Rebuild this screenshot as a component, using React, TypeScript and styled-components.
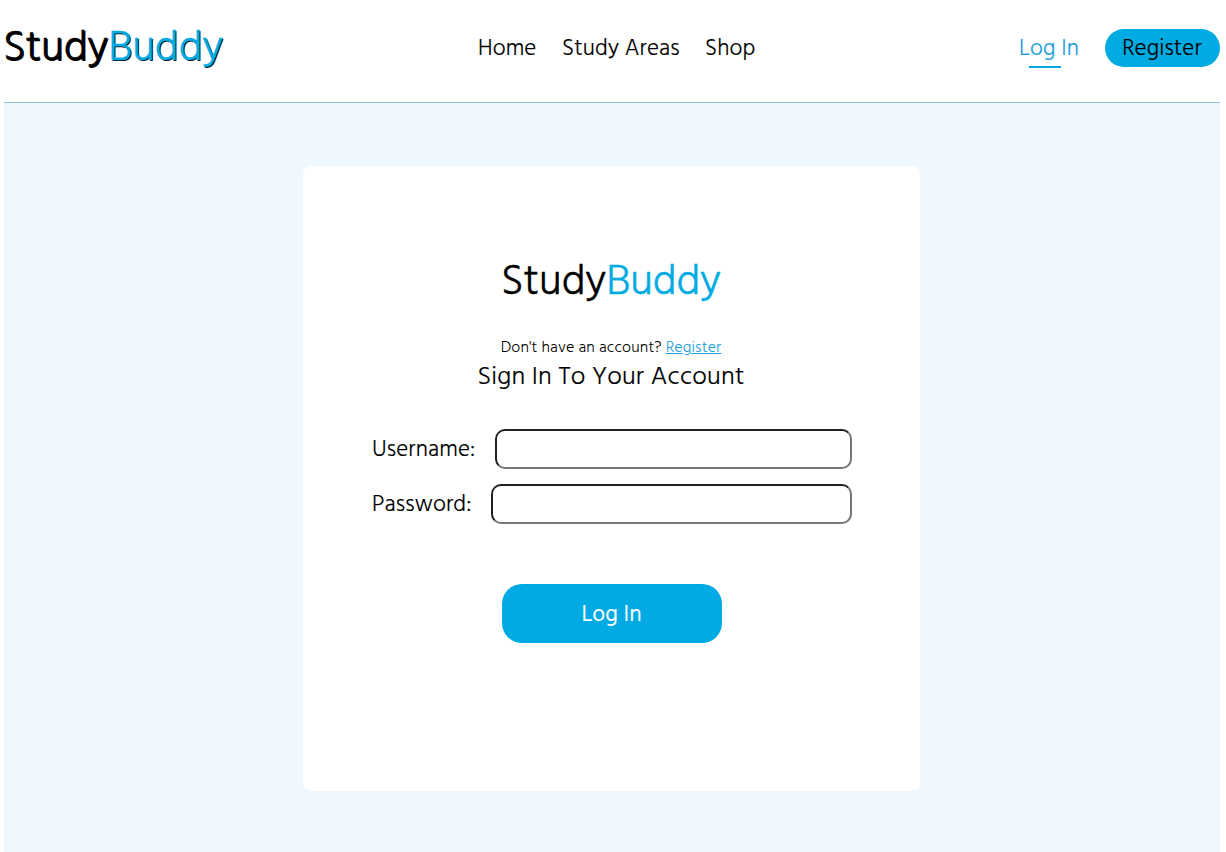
import React from "react";
import styled, { createGlobalStyle } from "styled-components";

const blue = "#00abe4";

const GlobalStyle = createGlobalStyle`
  * { box-sizing: border-box; }
  body {
    margin: 0 6px 0 4px;
    background: #fff;
    color: #000;
    font-family: Hind, "Open Sans", "Noto Sans", sans-serif;
    font-weight: 300;
    overflow: hidden;
  }
`;

const Header = styled.header`
  display: grid;
  grid-template-columns: 474px 1fr auto;
  align-items: center;
  height: 103px;
  padding-bottom: 6px;
  border-bottom: 1px solid #8fc1d4;
  -webkit-text-stroke: 0.15px;
`;

const Brand = styled.div<{ $shadow?: boolean }>`
  font-size: 43px;
  line-height: 60px;
  white-space: nowrap;
  letter-spacing: -0.1px;
  -webkit-text-stroke: 0.4px;
  text-shadow: ${(p) => (p.$shadow ? "1px 1px #000" : "none")};
  padding-top: ${(p) => (p.$shadow ? "1px" : "0")};
  margin-left: ${(p) => (p.$shadow ? "-1px" : "0")};
  span { color: ${blue}; }
`;

const Nav = styled.nav`
  display: flex;
  gap: 25px;
  padding-top: 4px;
`;

const NavLink = styled.a<{ $width: number }>`
  width: ${(p) => p.$width}px;
  font-size: 23px;
  line-height: 36px;
  letter-spacing: 0.12px;
  white-space: nowrap;
`;

const Actions = styled.div`
  display: flex;
  align-items: center;
  gap: 26px;
`;

const LoginLink = styled.a`
  display: flex;
  flex-direction: column;
  align-items: center;
  width: 60px;
  color: #219dd9;
  font-size: 23px;
  line-height: 36px;
  letter-spacing: 0.12px;
  padding-top: 4px;
  white-space: nowrap;
  &::after {
    content: "";
    width: 32px;
    height: 2px;
    margin: -2px 8px 0 0;
    background: ${blue};
  }
`;

const RegisterPill = styled.a`
  width: 115px;
  height: 38px;
  border-radius: 19px;
  background: ${blue};
  font-size: 23px;
  line-height: 42px;
  letter-spacing: 0.12px;
  padding-right: 1px;
  text-align: center;
`;

const Main = styled.main`
  display: flex;
  justify-content: center;
  height: 749px;
  padding: 63px 1px 0 0;
  background: #f0f8ff;
`;

const Card = styled.form`
  display: flex;
  flex-direction: column;
  align-items: center;
  width: 617px;
  height: 625px;
  padding: 87px 68px 0 69px;
  border-radius: 8px;
  background: #fff;
`;

const CardHead = styled.div`
  display: flex;
  flex-direction: column;
  align-items: center;
  padding-right: 2px;
`;

const Prompt = styled.p`
  margin: 23px 0 0;
  font-size: 16px;
  line-height: 25px;
  letter-spacing: 0.12px;
  white-space: nowrap;
  a {
    color: #219dd9;
    text-decoration: underline;
  }
`;

const Title = styled.h1`
  margin: 0 0 34px;
  font-size: 26px;
  font-weight: 300;
  line-height: 34px;
  letter-spacing: 0.18px;
  white-space: nowrap;
  -webkit-text-stroke: 0.15px;
`;

const Field = styled.label<{ $labelWidth: number }>`
  display: grid;
  grid-template-columns: ${(p) => p.$labelWidth}px 1fr;
  align-items: center;
  width: 480px;
  height: 40px;
  margin-bottom: 15px;
  font-size: 23px;
  line-height: 36px;
  letter-spacing: 0.12px;
  -webkit-text-stroke: 0.15px;
`;

const LabelText = styled.span`
  padding-top: 4px;
`;

const Input = styled.input`
  width: 100%;
  height: 40px;
  border: 2px inset #767676;
  border-radius: 10px;
  background: #fff;
  outline: none;
`;

const Submit = styled.button`
  width: 220px;
  height: 59px;
  margin-top: 45px;
  padding: 3px 1px 0 0;
  border: 0;
  border-radius: 20px;
  background: ${blue};
  color: #fff;
  font: inherit;
  font-size: 23px;
  font-weight: 400;
`;

export default function App() {
  return (
    <>
      <GlobalStyle />
      <Header>
        <Brand $shadow>Study<span>Buddy</span></Brand>
        <Nav>
          <NavLink $width={59}>Home</NavLink>
          <NavLink $width={118}>Study Areas</NavLink>
          <NavLink $width={50}>Shop</NavLink>
        </Nav>
        <Actions>
          <LoginLink>Log In</LoginLink>
          <RegisterPill>Register</RegisterPill>
        </Actions>
      </Header>
      <Main>
        <Card>
          <CardHead>
            <Brand>Study<span>Buddy</span></Brand>
            <Prompt>Don't have an account? <a>Register</a></Prompt>
            <Title>Sign In To Your Account</Title>
          </CardHead>
          <Field $labelWidth={123}><LabelText>Username:</LabelText><Input type="text" /></Field>
          <Field $labelWidth={119}><LabelText>Password:</LabelText><Input type="password" /></Field>
          <Submit type="button">Log In</Submit>
        </Card>
      </Main>
    </>
  );
}
